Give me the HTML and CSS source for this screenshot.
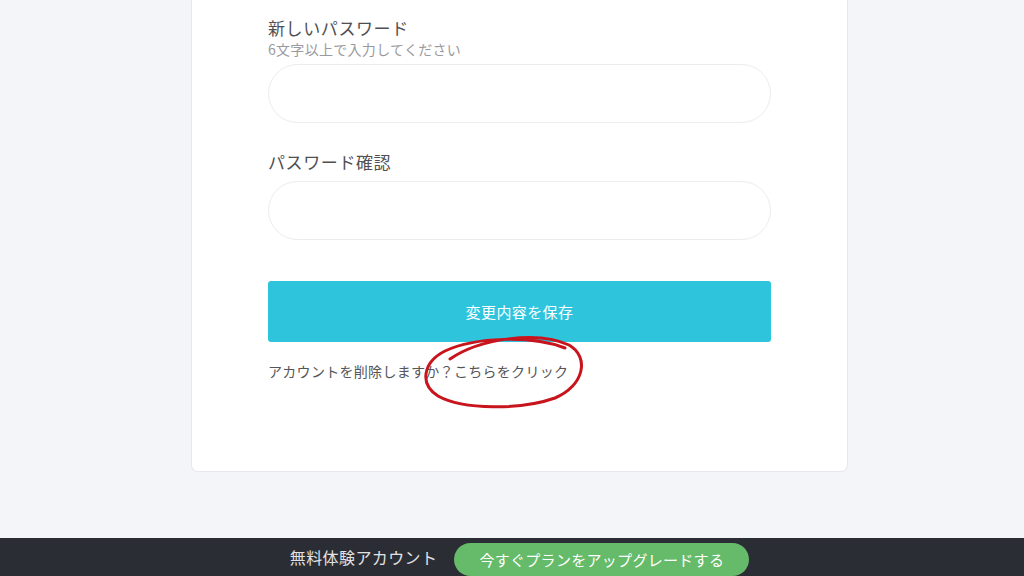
FILE: index.html
```html
<!DOCTYPE html>
<html lang="ja">
<head>
<meta charset="utf-8">
<title>パスワード変更</title>
<link rel="stylesheet" href="styles.css">
</head>
<body>
<div class="page">
  <main class="card">
    <div class="field">
      <label class="label">新しいパスワード</label>
      <div class="hint">6文字以上で入力してください</div>
      <input class="input input-first" type="password">
    </div>
    <div class="field field-second">
      <label class="label">パスワード確認</label>
      <input class="input" type="password">
    </div>
    <button class="save">変更内容を保存</button>
    <div class="delete">
      アカウントを削除しますか？<a class="delete-link">こちらをクリック</a>
      <svg class="circle" width="180" height="85" viewBox="0 0 180 85">
        <path d="M31,30 C60,10 118,1 150,16 C171,28 165,57 136,69 C102,81 44,81 19,67 C0,55 4,33 26,22 C56,8 112,6 146,19" fill="none" stroke="#c8141c" stroke-width="3" stroke-linecap="round"/>
      </svg>
    </div>
  </main>
  <footer class="trial-bar">
    <span class="trial-text">無料体験アカウント</span>
    <a class="upgrade">今すぐプランをアップグレードする</a>
  </footer>
</div>
</body>
</html>
```
FILE: styles.css
```css
* { box-sizing: border-box; }
html, body {
  margin: 0;
  padding: 0;
  background: #f4f5f9;
  font-family: "Noto Sans CJK JP", "Noto Sans", sans-serif;
}
.page {
  height: 576px;
  display: flex;
  flex-direction: column;
  align-items: center;
  overflow: hidden;
}
.card {
  width: 657px;
  margin-left: 15px;
  background: #ffffff;
  border: 1px solid #e6e8ee;
  border-top: none;
  border-radius: 0 0 7px 7px;
  padding: 16px 76px 90px;
  display: flex;
  flex-direction: column;
}
.field {
  display: flex;
  flex-direction: column;
}
.field-second {
  margin-top: 27px;
}
.label {
  font-size: 17px;
  letter-spacing: 0.6px;
  line-height: 24px;
  color: #505053;
}
.hint {
  font-size: 14px;
  letter-spacing: 0.3px;
  line-height: 18px;
  color: #9a9a9e;
}
.input {
  margin-top: 7px;
  height: 59px;
  width: 100%;
  border: 1px solid #ececec;
  border-radius: 30px;
  background: #fff;
  outline: none;
}
.input-first {
  margin-top: 6px;
}
.save {
  margin-top: 41px;
  height: 61px;
  width: 100%;
  border: none;
  border-radius: 3px;
  background: #2ec5dc;
  color: #ffffff;
  font-family: inherit;
  font-size: 15px;
  letter-spacing: 0.4px;
}
.delete {
  position: relative;
  margin-top: 19px;
  font-size: 14px;
  letter-spacing: 0.3px;
  line-height: 20px;
  color: #555558;
}
.delete-link {
  color: #555558;
}
.circle {
  position: absolute;
  left: 151px;
  top: -32px;
}
.trial-bar {
  margin-top: auto;
  width: 100%;
  height: 38px;
  background: #2b2d34;
  display: flex;
  justify-content: center;
  align-items: flex-end;
  gap: 17px;
  padding-left: 15px;
}
.trial-text {
  color: #e2e2e4;
  font-size: 16px;
  letter-spacing: 0.4px;
  line-height: 33px;
  align-self: center;
}
.upgrade {
  height: 33px;
  padding: 0 25px;
  border-radius: 17px;
  background: #66bb6a;
  color: #ffffff;
  font-size: 15px;
  letter-spacing: 0.3px;
  line-height: 33px;
}
```
